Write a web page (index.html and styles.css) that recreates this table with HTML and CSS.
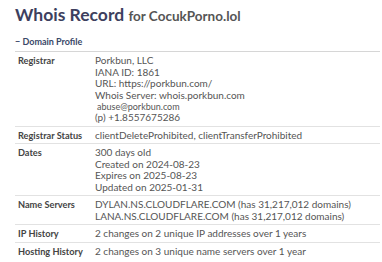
FILE: index.html
```html
<!DOCTYPE html>
<html>
<head>
<meta charset="utf-8">
<link rel="stylesheet" href="styles.css">
</head>
<body>
<div class="page">
  <h1 class="title">Whois Record <span class="for">for CocukPorno.lol</span></h1>
  <div class="section-head"><span class="dash">−</span> Domain Profile</div>
  <div class="table">
    <div class="row">
      <div class="label">Registrar</div>
      <div class="value">
        <div>Porkbun, LLC</div>
        <div>IANA ID: 1861</div>
        <div>URL: https://porkbun.com/</div>
        <div>Whois Server: whois.porkbun.com</div>
        <div class="email">abuse@porkbun.com</div>
        <div>(p) +1.8557675286</div>
      </div>
    </div>
    <div class="row">
      <div class="label">Registrar Status</div>
      <div class="value">clientDeleteProhibited, clientTransferProhibited</div>
    </div>
    <div class="row">
      <div class="label">Dates</div>
      <div class="value">
        <div>300 days old</div>
        <div>Created on 2024-08-23</div>
        <div>Expires on 2025-08-23</div>
        <div>Updated on 2025-01-31</div>
      </div>
    </div>
    <div class="row">
      <div class="label">Name Servers</div>
      <div class="value">
        <div>DYLAN.NS.CLOUDFLARE.COM (has 31,217,012 domains)</div>
        <div>LANA.NS.CLOUDFLARE.COM (has 31,217,012 domains)</div>
      </div>
    </div>
    <div class="row">
      <div class="label">IP History</div>
      <div class="value">2 changes on 2 unique IP addresses over 1 years</div>
    </div>
    <div class="row last">
      <div class="label">Hosting History</div>
      <div class="value">2 changes on 3 unique name servers over 1 year</div>
    </div>
  </div>
</div>
</body>
</html>
```
FILE: styles.css
```css
* { box-sizing: border-box; }
html, body { margin: 0; padding: 0; background: #fff; }
body { font-family: Lato, "Open Sans", sans-serif; color: #444; }
.page { padding: 4px 2px 0 15px; width: 382px; }
.title {
  margin: 0;
  font-size: 17.5px;
  font-weight: 700;
  color: #3d3f5e;
  line-height: 21px;
}
.title .for { font-size: 13.5px; color: #555; font-weight: 700; }
.section-head {
  margin-top: 9px;
  font-size: 9px;
  line-height: 12px;
  font-weight: 700;
  color: #3a4868;
  padding-bottom: 3px;
  border-bottom: 1px solid #d6d6d6;
}
.table { font-size: 10px; }
.row {
  display: grid;
  grid-template-columns: 77px 1fr;
  padding: 3px 0 2px 3px;
  border-bottom: 1px solid #e2e2e2;
  line-height: 11.5px;
}
.row.last { border-bottom: none; }
.label { color: #444; font-weight: 700; font-size: 9.2px; }
.value { color: #555; }
.email { font-size: 9px; padding-left: 2px; line-height: 11px; }
```
